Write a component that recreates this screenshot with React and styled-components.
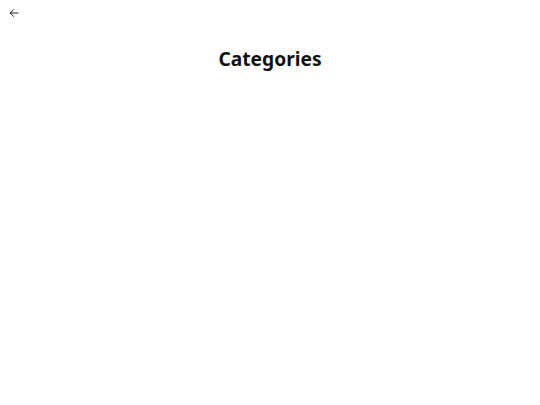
import React from 'react';
import styled, { createGlobalStyle } from 'styled-components';

const Global = createGlobalStyle`
  body {
    margin: 0;
    background: #ffffff;
    font-family: "Noto Sans", "Open Sans", sans-serif;
  }
`;

const Page = styled.div`
  display: flex;
  flex-direction: column;
  min-height: 405px;
  color: #111111;
`;

const TopBar = styled.div`
  display: flex;
  align-items: center;
  height: 26px;
  padding: 0 8px;
`;

const BackButton = styled.button`
  display: flex;
  align-items: center;
  justify-content: center;
  border: none;
  background: none;
  padding: 0;
  width: 11px;
  height: 11px;
  cursor: pointer;
  color: #222222;
`;

const Title = styled.h1`
  margin: 19px 0 0;
  text-align: center;
  font-size: 19.2px;
  font-weight: 700;
  line-height: 28px;
`;

const BackIcon = () => (
  <svg width="10" height="10" viewBox="0 0 10 10" fill="none" stroke="currentColor" strokeWidth="1" strokeLinecap="round">
    <path d="M9 5H1.2M4.6 1.6L1.2 5l3.4 3.4" />
  </svg>
);

const App = () => (
  <Page>
    <Global />
    <TopBar>
      <BackButton aria-label="Back">
        <BackIcon />
      </BackButton>
    </TopBar>
    <Title>Categories</Title>
  </Page>
);

export default App;
